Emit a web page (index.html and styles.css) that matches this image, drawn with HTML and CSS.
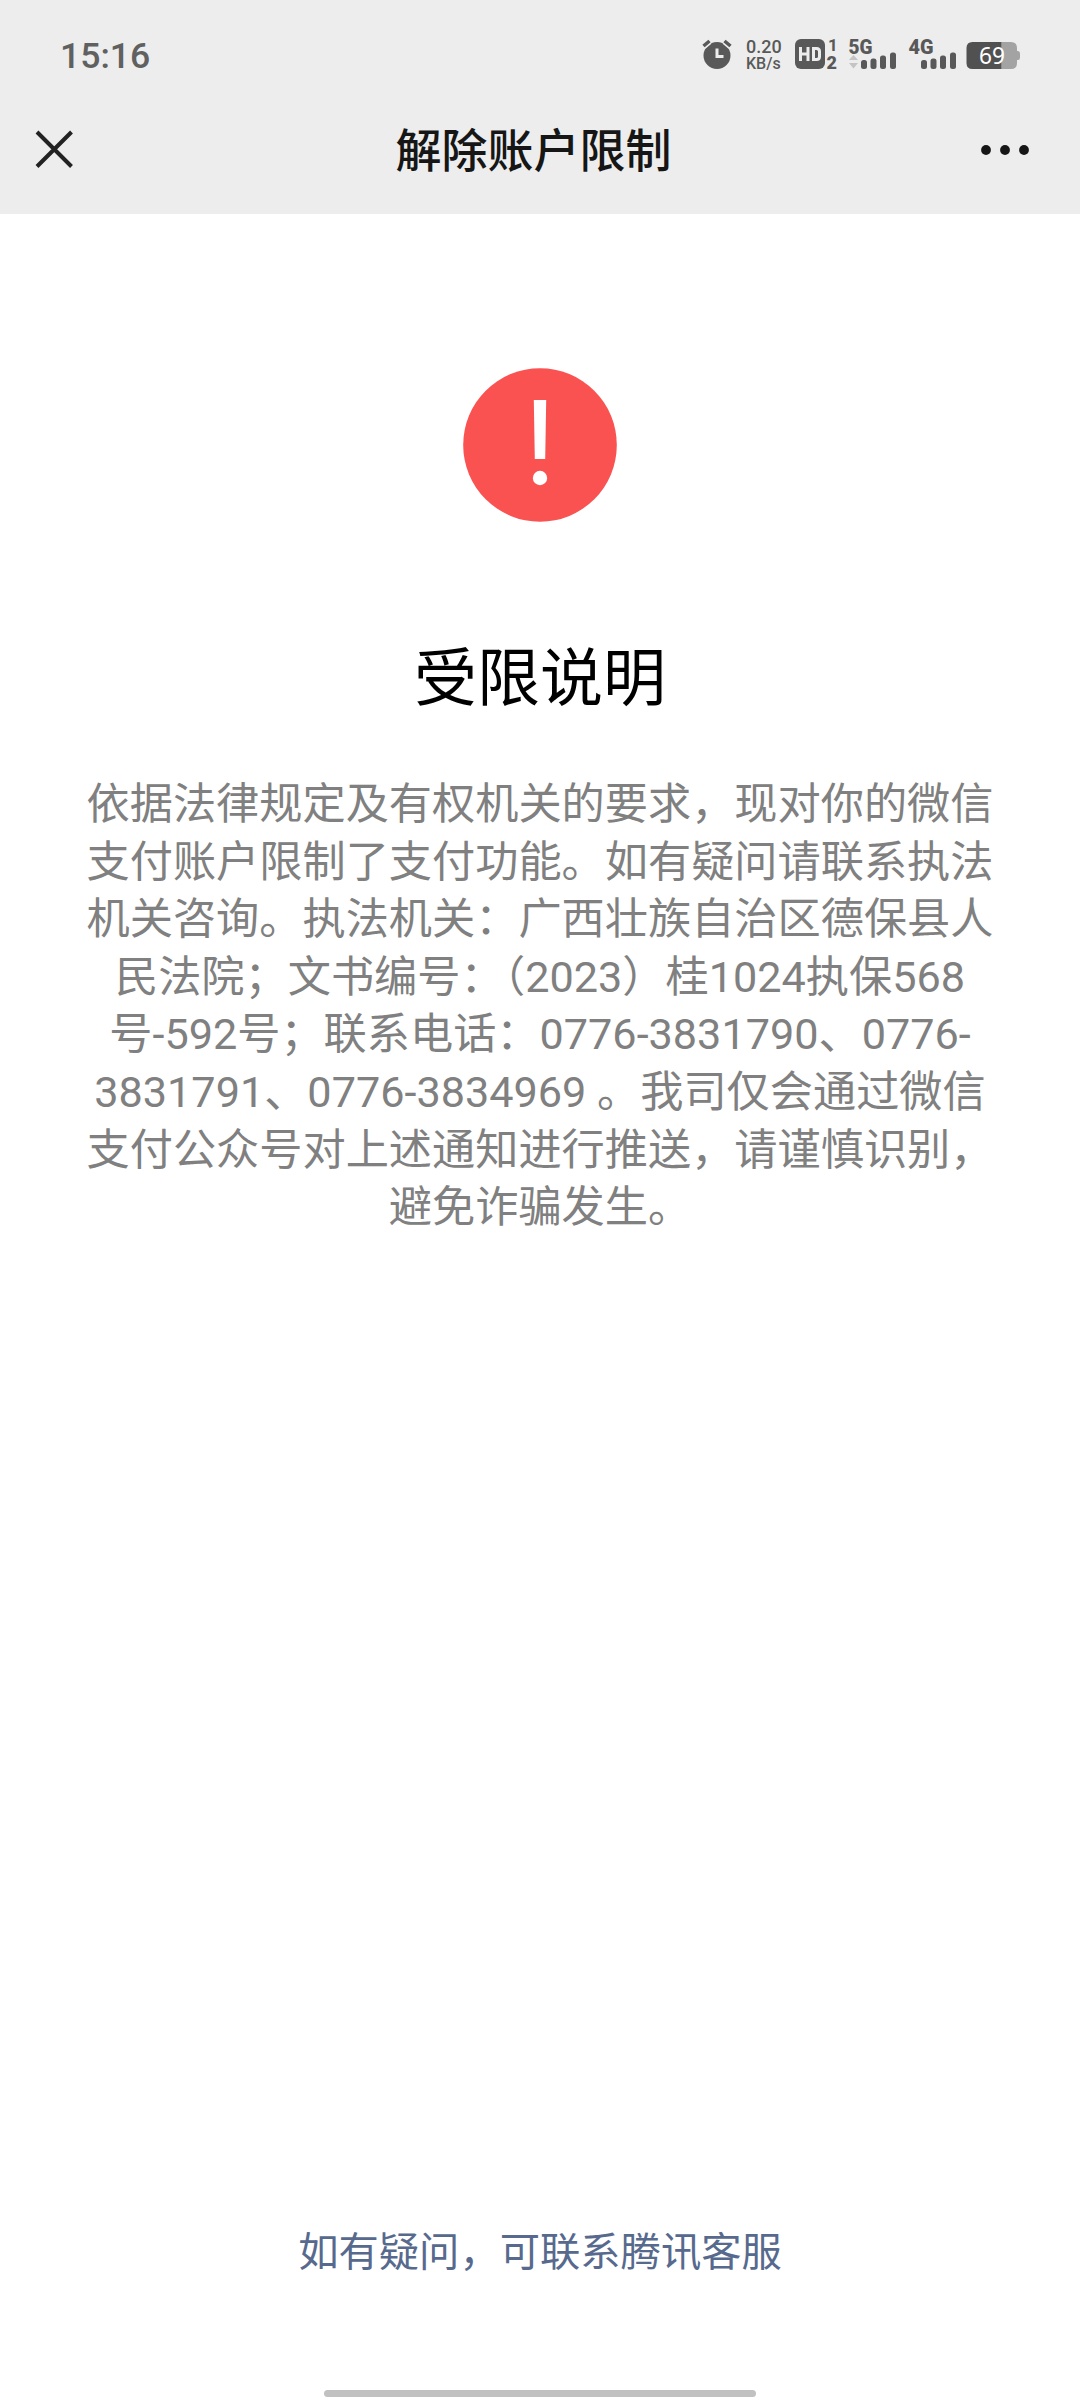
FILE: index.html
```html
<!DOCTYPE html>
<html lang="zh-CN">
<head>
<meta charset="utf-8">
<title>解除账户限制</title>
<link rel="stylesheet" href="styles.css">
</head>
<body>
<div class="screen">
  <header class="top">
    <div class="status">
      <span class="clock">15:16</span>
      <div class="indicators">
        <svg class="ind" width="32" height="36" viewBox="0 0 32 36">
          <circle cx="15" cy="19.500" r="13.500" fill="#595959"/>
          <path d="M1.500 10.500L7.500 5.500M22.500 5.500L28.500 10.500" stroke="#ededed" stroke-width="6"/>
          <path d="M1.500 10L7.500 5M22.500 5L28.500 10" stroke="#595959" stroke-width="3.500"/>
          <path d="M15 12.500V20.500H21.500" fill="none" stroke="#ededed" stroke-width="3"/>
        </svg>
        <div class="speed"><span class="rate">0.20</span><span class="unit">KB/s</span></div>
        <svg class="ind" width="44" height="36" viewBox="0 0 44 36">
          <rect x="1" y="3" width="30" height="30" rx="6" fill="#595959"/>
          <path d="M6.500 11V25M14 11V25M6.500 18H14M19.500 12.500H22.500Q25.500 12.500 25.500 15.500V20.500Q25.500 23.500 22.500 23.500H19.500Z" fill="none" stroke="#ededed" stroke-width="3"/>
          <text class="sim" x="34" y="15">1</text>
          <text class="sim sim-active" x="32.500" y="32.500">2</text>
        </svg>
        <svg class="ind" width="50" height="36" viewBox="0 0 50 36">
          <text class="net" x="0.500" y="17.500" textLength="24" lengthAdjust="spacingAndGlyphs">5G</text>
          <path d="M1 24L5.500 19L10 24ZM1 27L5.500 32.500L10 27Z" fill="#c4c4c4"/>
          <g fill="#595959"><rect x="13" y="24" width="6" height="9" rx="2.500"/><rect x="22.500" y="22.500" width="6" height="10.500" rx="2.500"/><rect x="32" y="19.500" width="6" height="13.500" rx="2.500"/><rect x="42" y="16.500" width="6" height="16.500" rx="2.500"/></g>
        </svg>
        <svg class="ind" width="48" height="36" viewBox="0 0 48 36">
          <text class="net" x="0.500" y="17.500" textLength="25" lengthAdjust="spacingAndGlyphs">4G</text>
          <g fill="#595959"><rect x="13" y="24" width="6" height="9" rx="2.500"/><rect x="22.500" y="22.500" width="6" height="10.500" rx="2.500"/><rect x="32" y="19.500" width="6" height="13.500" rx="2.500"/><rect x="42" y="16.500" width="6" height="16.500" rx="2.500"/></g>
        </svg>
        <svg class="ind" width="56" height="36" viewBox="0 0 56 36">
          <path d="M35.500 6H45Q51 6 51 12V15H52Q54 15 54 17.500V21.500Q54 24 52 24H51V27Q51 33 45 33H35.500Z" fill="#a3a3a3"/>
          <path d="M35.500 6H6.500Q0.500 6 0.500 12V27Q0.500 33 6.500 33H35.500Z" fill="#515151"/>
          <text class="level" x="13" y="28" textLength="26" lengthAdjust="spacingAndGlyphs">69</text>
        </svg>
      </div>
    </div>
    <nav class="nav">
      <svg class="close" width="40" height="40" viewBox="0 0 40 40"><path d="M3 3L37.500 37.500M37.500 3L3 37.500" stroke="#222" stroke-width="4"/></svg>
      <h1 class="title">解除账户限制</h1>
      <svg class="more" width="48" height="12" viewBox="0 0 48 12" fill="#161616"><circle cx="5" cy="6" r="4.900"/><circle cx="24" cy="6" r="4.900"/><circle cx="43" cy="6" r="4.900"/></svg>
    </nav>
  </header>
  <main class="content">
    <svg class="warn" width="154" height="154" viewBox="0 0 154 154">
      <circle cx="77" cy="77" r="76.800" fill="#fa5151"/>
      <path d="M70.800 32H83.200L82.200 91H71.800Z" fill="#fff"/>
      <circle cx="77" cy="110" r="7.200" fill="#fff"/>
    </svg>
    <h2 class="heading">受限说明</h2>
    <p class="notice">依据法律规定及有权机关的要求，现对你的微信<br>支付账户限制了支付功能。如有疑问请联系执法<br>机关咨询。执法机关：广西壮族自治区德保县人<br>民法院；文书编号：（2023）桂1024执保568<br>号-592号；联系电话：0776-3831790、0776-<br>3831791、0776-3834969 。我司仅会通过微信<br>支付公众号对上述通知进行推送，请谨慎识别，<br>避免诈骗发生。</p>
  </main>
  <footer class="bottom">
    <a class="service">如有疑问，可联系腾讯客服</a>
    <div class="home-bar"></div>
  </footer>
</div>
</body>
</html>
```
FILE: styles.css
```css
* { box-sizing: border-box; }
body {
  margin: 0;
  background: #fff;
  font-family: Roboto, "Noto Sans CJK SC", sans-serif;
}
.screen {
  width: 1080px;
  height: 2400px;
  display: flex;
  flex-direction: column;
  background: #fff;
}
.top { height: 214px; background: #ededed; }
.status {
  height: 72px;
  padding: 36px 58px 0 60px;
  display: flex;
  justify-content: space-between;
}
.clock {
  font-size: 35.6px;
  font-weight: 500;
  line-height: 40px;
  color: #606060;
}
.indicators { display: flex; gap: 10px; }
.ind { display: block; }
.speed {
  width: 40px;
  padding: 3px 0 0 2px;
  display: flex;
  flex-direction: column;
  font-weight: 500;
  color: #595959;
  white-space: nowrap;
}
.rate { font-size: 18px; line-height: 16px; }
.unit { font-size: 16px; line-height: 17px; }
.sim { font: 700 17px Roboto, sans-serif; fill: #595959; }
.sim-active { font-size: 18px; font-weight: 900; }
.net { font: 900 20px Roboto, sans-serif; fill: #595959; }
.level { font: 400 24px "Noto Sans", sans-serif; fill: #fff; }
.nav {
  height: 142px;
  padding: 0 51px 0 34px;
  display: grid;
  grid-template-columns: 46px 1fr 48px;
  align-items: center;
}
.close { margin-top: 12px; }
.title {
  margin: 16px 0 0 6px;
  font-size: 46px;
  font-weight: 500;
  line-height: 60px;
  text-align: center;
  color: #161616;
}
.more { margin-top: 13px; }
.content {
  flex: 1;
  padding: 153px 80px 0;
  display: flex;
  flex-direction: column;
  align-items: center;
}
.warn { margin-top: 1px; }
.heading {
  margin: 112px 0 0;
  font-size: 63px;
  font-weight: 400;
  line-height: 90px;
  color: #000;
}
.notice {
  margin: 52px 0 0;
  font-size: 43.2px;
  line-height: 57.6px;
  text-align: center;
  white-space: nowrap;
  color: #808080;
}
.bottom {
  height: 177px;
  display: flex;
  flex-direction: column;
  align-items: center;
  justify-content: space-between;
  padding-bottom: 3px;
}
.service { font-size: 40.3px; line-height: 60px; color: #576a8e; }
.home-bar { width: 432px; height: 7px; border-radius: 4px; background: #c1c1c1; }
```
